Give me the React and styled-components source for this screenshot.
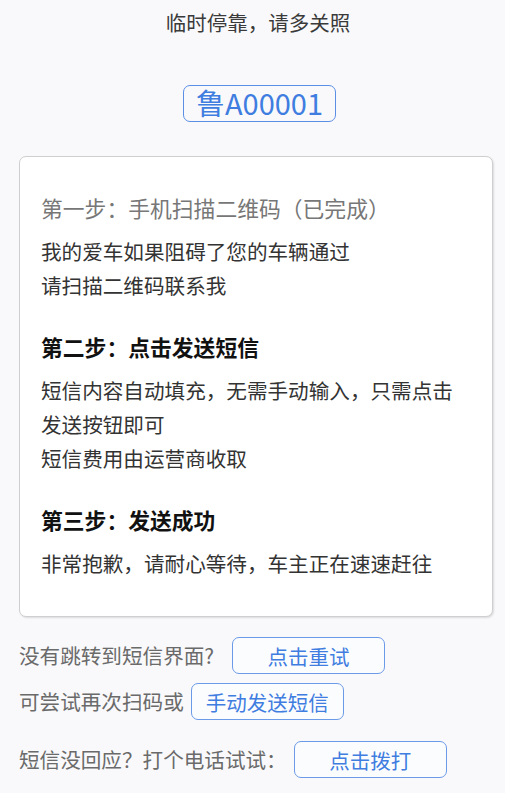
import React from "react";
import styled, { createGlobalStyle } from "styled-components";

const GlobalStyle = createGlobalStyle`
  html, body {
    margin: 0;
    padding: 0;
    background: #f9f9fb;
  }
  body {
    font-family: "Noto Sans CJK SC", "Noto Sans", sans-serif;
  }
`;

const Page = styled.div`
  display: flex;
  flex-direction: column;
  padding: 0 12px 0 19px;
  width: 505px;
  box-sizing: border-box;
`;

const Header = styled.div`
  text-align: center;
  font-size: 20.5px;
  line-height: 44px;
  color: #3a3a3a;
  padding-left: 4px;
`;

const PlateWrap = styled.div`
  display: flex;
  justify-content: center;
  margin-top: 41px;
  padding-left: 7px;
`;

const Plate = styled.div`
  width: 153px;
  height: 37px;
  box-sizing: border-box;
  border: 1.5px solid #5b8fe6;
  border-radius: 7px;
  color: #3f7de0;
  font-size: 29px;
  line-height: 33px;
  text-align: center;
`;

const Card = styled.div`
  margin-top: 34px;
  background: #fff;
  border: 1px solid #cfcfcf;
  border-radius: 7px;
  box-shadow: 1px 1px 2px rgba(0, 0, 0, 0.12);
  padding: 34px 21px 36px;
  display: flex;
  flex-direction: column;
`;

const Step = styled.div`
  display: flex;
  flex-direction: column;
  gap: 9px;
  & + & {
    margin-top: 28px;
  }
`;

const StepTitle = styled.div`
  font-size: 21.8px;
  line-height: 34px;
  color: ${(p) => (p.$done ? "#777" : "#111")};
  font-weight: ${(p) => (p.$done ? 400 : 700)};
`;

const StepBody = styled.div`
  font-size: 20.6px;
  line-height: 34px;
  color: #333;
`;

const Actions = styled.div`
  margin-top: 20px;
  display: flex;
  flex-direction: column;
`;

const Row = styled.div`
  display: flex;
  align-items: center;
  margin-top: ${(p) => p.$mt || 0}px;
`;

const RowText = styled.span`
  font-size: 20.6px;
  color: #6a6a6a;
  line-height: 37px;
`;

const ActionButton = styled.button`
  margin-left: ${(p) => p.$ml}px;
  width: 153px;
  height: 37px;
  box-sizing: border-box;
  border: 1.5px solid #6b9ae8;
  border-radius: 7px;
  background: #fbfcfe;
  color: #3f7de0;
  font-family: "Noto Sans CJK SC", "Noto Sans", sans-serif;
  font-size: 20.5px;
  padding: 0;
  cursor: pointer;
`;

export default function App() {
  return (
    <>
      <GlobalStyle />
      <Page>
        <Header>临时停靠，请多关照</Header>
        <PlateWrap>
          <Plate>鲁A00001</Plate>
        </PlateWrap>
        <Card>
          <Step>
            <StepTitle $done>第一步：手机扫描二维码（已完成）</StepTitle>
            <StepBody>
              我的爱车如果阻碍了您的车辆通过
              <br />
              请扫描二维码联系我
            </StepBody>
          </Step>
          <Step>
            <StepTitle>第二步：点击发送短信</StepTitle>
            <StepBody>
              短信内容自动填充，无需手动输入，只需点击发送按钮即可
              <br />
              短信费用由运营商收取
            </StepBody>
          </Step>
          <Step>
            <StepTitle>第三步：发送成功</StepTitle>
            <StepBody>非常抱歉，请耐心等待，车主正在速速赶往</StepBody>
          </Step>
        </Card>
        <Actions>
          <Row>
            <RowText>没有跳转到短信界面?</RowText>
            <ActionButton $ml={18}>点击重试</ActionButton>
          </Row>
          <Row $mt={9}>
            <RowText>可尝试再次扫码或</RowText>
            <ActionButton $ml={7}>手动发送短信</ActionButton>
          </Row>
          <Row $mt={21}>
            <RowText>短信没回应？打个电话试试：</RowText>
            <ActionButton $ml={7}>点击拨打</ActionButton>
          </Row>
        </Actions>
      </Page>
    </>
  );
}
